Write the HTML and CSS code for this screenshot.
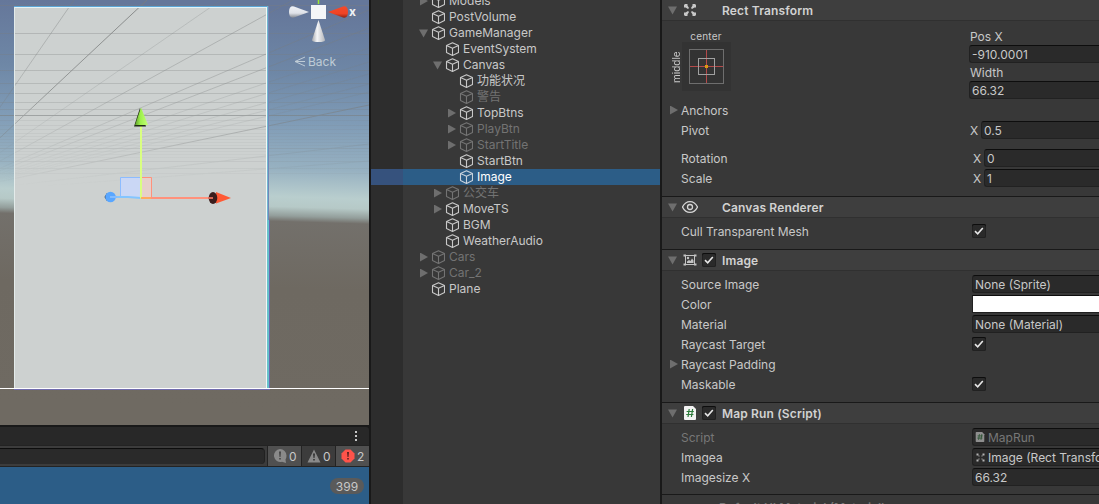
FILE: index.html
```html
<!DOCTYPE html>
<html lang="zh-CN">
<head>
    <meta charset="UTF-8">
    <meta name="viewport" content="width=device-width, initial-scale=1.0">
    <title>Editor</title>
    <link rel="stylesheet" href="styles.css">
</head>
<body>
    <svg class="defs" aria-hidden="true">
        <symbol id="cube" viewBox="0 0 14 14">
            <path d="M7.500.8 13.500 3.600v7L7.500 13.400 1.500 10.600v-7zM1.500 3.600l6 2.700 6-2.700M7.500 6.300v7" fill="none" stroke="currentColor" stroke-width="1.100" stroke-linejoin="round"/>
        </symbol>
        <symbol id="check" viewBox="0 0 14 14">
            <path d="M3 7.200 5.700 9.800 10.800 4" fill="none" stroke="#e6e6e6" stroke-width="1.600"/>
        </symbol>
        <symbol id="rect" viewBox="0 0 14 14">
            <path d="M2 1h2.500v1.500L6 5 5 6 2.500 4.500H1V2zM12 1H9.500v1.500L8 5l1 1 2.500-1.500H13V2zM2 13h2.500v-1.500L6 9 5 8 2.500 9.500H1V12zM12 13H9.500v-1.500L8 9l1-1 2.500 1.500H13V12z" fill="currentColor"/>
        </symbol>
        <symbol id="script" viewBox="0 0 12 14">
            <path d="M1 0h8l3 3v10a1 1 0 0 1-1 1H1a1 1 0 0 1-1-1V1a1 1 0 0 1 1-1z" fill="#f2f2f2"/>
            <path d="M5.200 3 4 11M8.600 3 7.400 11M2.600 5.500h7.200M2.200 8.500h7.200" fill="none" stroke="#2c7a3a" stroke-width="1.200"/>
        </symbol>
    </svg>

    <div class="editor">
        <div class="left">
            <svg class="scene" width="369" height="425" viewBox="0 0 369 425">
                <defs>
                    <linearGradient id="sky" gradientUnits="userSpaceOnUse" x1="0" y1="0" x2="-12" y2="400">
                        <stop offset="0" stop-color="#65779a"/>
                        <stop offset=".16" stop-color="#6e87a6"/>
                        <stop offset=".28" stop-color="#7f9bb6"/>
                        <stop offset=".4" stop-color="#97b1c1"/>
                        <stop offset=".47" stop-color="#b9cece"/>
                        <stop offset=".495" stop-color="#b6c9c7"/>
                        <stop offset=".518" stop-color="#939e9b"/>
                        <stop offset=".532" stop-color="#73706b"/>
                        <stop offset=".7" stop-color="#6e6961"/>
                        <stop offset="1" stop-color="#6f6a62"/>
                    </linearGradient>
                    <linearGradient id="fade" x1="0" y1="0" x2="0" y2="1">
                        <stop offset="0" stop-color="#fff"/>
                        <stop offset=".5" stop-color="#ccc"/>
                        <stop offset="1" stop-color="#000"/>
                    </linearGradient>
                    <mask id="haze"><rect width="369" height="186" fill="url(#fade)"/></mask>
                    <linearGradient id="green" x1="0" x2="1">
                        <stop offset="0" stop-color="#5c9a2b"/>
                        <stop offset=".4" stop-color="#9cf04a"/>
                        <stop offset="1" stop-color="#c5ff78"/>
                    </linearGradient>
                    <linearGradient id="cone" x1="0" x2="1">
                        <stop offset="0" stop-color="#a5a7ab"/>
                        <stop offset=".4" stop-color="#f4f5f7"/>
                        <stop offset="1" stop-color="#b4b6ba"/>
                    </linearGradient>
                    <linearGradient id="coneSide" x1="0" y1="0" x2="0" y2="1">
                        <stop offset="0" stop-color="#eff2f6"/>
                        <stop offset=".6" stop-color="#dfe2e8"/>
                        <stop offset="1" stop-color="#858a92"/>
                    </linearGradient>
                    <linearGradient id="redSide" x1="0" y1="0" x2="0" y2="1">
                        <stop offset="0" stop-color="#f44a2b"/>
                        <stop offset=".65" stop-color="#ee4325"/>
                        <stop offset="1" stop-color="#8c2414"/>
                    </linearGradient>
                </defs>

                <rect width="369" height="425" fill="url(#sky)"/>
                <path d="M14 7H268V388H14z" fill="#cdd1d0"/>

                <!-- ground grid, vanishing to the left of the view -->
                <g fill="none" stroke="#7b7e7e" mask="url(#haze)">
                    <path stroke-opacity=".34" d="M0 5.500H369M0 33.500H369M0 54.500H369M0 70.500H369M0 83.500H369M0 93.500H369M0 102.500H369M0 109.500H369"/>
                    <path stroke-opacity=".9" d="M0 115.500H369"/>
                    <path stroke-opacity=".2" d="M0 120.500H369M0 125.500H369M0 129.500H369M0 133.500H369M0 136.500H369M0 139.500H369M0 142.500H369M0 145.500H369M0 151.500H369M0 154.500H369M0 157.500H369"/>
                    <path stroke-opacity=".6" d="M0 148.500H369M0 161.500H369M0 168.500H369M0 173.500H369"/>
                    <path stroke-opacity=".4" d="M-60 194 74 0M-60 194 293 0M-60 194 392 0M-60 194 369 28"/>
                    <path stroke-opacity=".26" d="M-60 194 221 0M-60 194 369 48M-60 194 369 62M-60 194 369 74M-60 194 369 84M-60 194 369 92"/>
                    <path stroke-opacity=".85" d="M-60 194 147 0M-60 194 369 105"/>
                    <path stroke-opacity=".6" d="M-60 194 369 144M-60 194 369 161"/>
                </g>

                <path d="M14.500 7V388" stroke="#e3ebea"/>
                <path d="M14 6.500H268" stroke="#5ba6d8"/>
                <path d="M15 7.500H267" stroke="#e4f3f6"/>
                <path d="M266.500 7V388" stroke="#f2f7f6"/>
                <path d="M267.500 6V388" stroke="#70b9d0"/>
                <path d="M268.500 6V220" stroke="#7384b8"/>
                <path d="M268 220V388" stroke="#66c2cb" stroke-width="2"/>
                <path d="M269.500 220V388" stroke="#6c66ab"/>
                <path d="M14 389.500H270" stroke="#716cae"/>
                <path d="M0 388.500H369" stroke="#fff"/>

                <!-- move gizmo -->
                <path d="M120.500 197V177.500H141V197z" fill="#cad7f5"/>
                <path d="M120.500 197V177.500H141" fill="none" stroke="#8dbcff"/>
                <path d="M141 177.500H151.500V197H141z" fill="#e6cfcb"/>
                <path d="M141 177.500H151.500V197" fill="none" stroke="#ff927c"/>
                <path d="M141 198H212" stroke="#ff927c" stroke-width="2"/>
                <path d="M115 197H128L141 198" fill="none" stroke="#83c5ff" stroke-width="2"/>
                <path d="M141 126V198.500" stroke="#d9ff80" stroke-width="2"/>
                <path d="M141 198H151" stroke="#ffa960" stroke-width="2"/>
                <path d="M104.500 197 107 193V201z" fill="#1c2a38"/>
                <circle cx="110.500" cy="197" r="5.300" fill="#5aa7ff"/>
                <path d="M110 197H117" stroke="#83bcff" stroke-width="2"/>
                <path d="M140 108 134 126.500H146z" fill="#1e2a12"/>
                <path d="M141 107.500 135 125H148z" fill="url(#green)"/>
                <path d="M216 192 231 198 216 203.500z" fill="#ff5a35"/>
                <ellipse cx="213" cy="198" rx="4.300" ry="6" fill="#3c1d1c"/>
                <path d="M209 198H213" stroke="#d46555" stroke-width="2"/>

                <!-- orientation gizmo -->
                <path d="M318.500 0V4" stroke="#9be832" stroke-width="1.500"/>
                <path d="M309 12 294 6.500Q289 5.500 289 12T294 17.500z" fill="url(#coneSide)"/>
                <path d="M328 12 343 6.500Q348 5.500 348 12T343 17.500z" fill="url(#redSide)"/>
                <path d="M318.500 20 325 40Q325 42 318.500 42T312 40z" fill="url(#cone)"/>
                <path d="M311 5H326V19H311z" fill="#f5f6f8"/>
                <text class="axis" x="349" y="15.500">x</text>
                <path d="M305 57 295 61.500 305 66M295 61.500H305" fill="none" stroke="#bfccd6"/>
                <text class="view" x="308" y="66">Back</text>
            </svg>

            <div class="console">
                <div class="tabs"><i></i><i></i><i></i></div>
                <div class="toolbar">
                    <div class="search"></div>
                    <div class="count on">
                        <svg width="14" height="14" viewBox="0 0 14 14"><path d="M7 0a6.500 6.500 0 0 1 6.500 6.500c0 2-.5 3-1 4l.5 3.500-4-1.200A6.500 6.500 0 1 1 7 0z" fill="#8a8a8a"/><path d="M6 2.500h2L7.500 8h-1zM6.200 9h1.600v1.600H6.200z" fill="#444"/></svg>
                        <span>0</span>
                    </div>
                    <div class="count">
                        <svg width="14" height="14" viewBox="0 0 14 14"><path d="M7 .5 13.500 13.500H.5z" fill="#8a8a8a"/><path d="M6 4.500h2l-.5 4.500h-1zM6.200 10h1.600v1.600H6.200z" fill="#333"/></svg>
                        <span>0</span>
                    </div>
                    <div class="count on">
                        <svg width="14" height="14" viewBox="0 0 14 14"><path d="M4.500.5h5l4 4v5l-4 4h-5l-4-4v-5z" fill="#ff534a"/><path d="M6 3h2l-.5 5h-1zM6.200 9h1.600v1.600H6.200z" fill="#5a2020"/></svg>
                        <span>2</span>
                    </div>
                </div>
                <div class="log"><span class="badge">399</span></div>
            </div>
        </div>

        <div class="hierarchy">
            <div class="row"><b class="fold"></b><svg><use href="#cube"/></svg><span>Models</span></div>
            <div class="row"><b></b><svg><use href="#cube"/></svg><span>PostVolume</span></div>
            <div class="row"><b class="fold open"></b><svg><use href="#cube"/></svg><span>GameManager</span></div>
            <div class="row l1"><b></b><svg><use href="#cube"/></svg><span>EventSystem</span></div>
            <div class="row l1"><b class="fold open"></b><svg><use href="#cube"/></svg><span>Canvas</span></div>
            <div class="row l2"><b></b><svg><use href="#cube"/></svg><span>功能状况</span></div>
            <div class="row l2 off"><b></b><svg><use href="#cube"/></svg><span>警告</span></div>
            <div class="row l2"><b class="fold"></b><svg><use href="#cube"/></svg><span>TopBtns</span></div>
            <div class="row l2 off"><b class="fold"></b><svg><use href="#cube"/></svg><span>PlayBtn</span></div>
            <div class="row l2 off"><b class="fold"></b><svg><use href="#cube"/></svg><span>StartTitle</span></div>
            <div class="row l2"><b></b><svg><use href="#cube"/></svg><span>StartBtn</span></div>
            <div class="row l2 selected"><b></b><svg><use href="#cube"/></svg><span>Image</span></div>
            <div class="row l1 off"><b class="fold"></b><svg><use href="#cube"/></svg><span>公交车</span></div>
            <div class="row l1"><b class="fold"></b><svg><use href="#cube"/></svg><span>MoveTS</span></div>
            <div class="row l1"><b></b><svg><use href="#cube"/></svg><span>BGM</span></div>
            <div class="row l1"><b></b><svg><use href="#cube"/></svg><span>WeatherAudio</span></div>
            <div class="row off"><b class="fold"></b><svg><use href="#cube"/></svg><span>Cars</span></div>
            <div class="row off"><b class="fold"></b><svg><use href="#cube"/></svg><span>Car_2</span></div>
            <div class="row"><b></b><svg><use href="#cube"/></svg><span>Plane</span></div>
        </div>

        <div class="inspector">
            <section class="transform">
                <header>
                    <b class="fold open"></b>
                    <svg class="icon" width="16" height="14"><use href="#rect"/></svg>
                    <h2>Rect Transform</h2>
                </header>
                <div class="anchor-row">
                    <span class="middle">middle</span>
                    <div class="anchor">
                        <span>center</span>
                        <svg width="49" height="49" viewBox="0 0 49 49">
                            <rect width="49" height="49" fill="#333"/>
                            <path d="M24.500 8V41M8 24.500H41" stroke="#b34a4a"/>
                            <rect x="7.500" y="7.500" width="34" height="34" fill="none" stroke="#6e6e6e"/>
                            <rect x="16.500" y="16.500" width="16" height="16" fill="none" stroke="#a0a0a0"/>
                            <rect x="23" y="23" width="3" height="3" fill="#d99a10"/>
                        </svg>
                    </div>
                    <div class="size">
                        <label>Pos X</label>
                        <div class="field">-910.0001</div>
                        <label>Width</label>
                        <div class="field">66.32</div>
                    </div>
                </div>
                <div class="prop"><b class="fold"></b><label>Anchors</label></div>
                <div class="prop pivot"><b></b><label>Pivot</label><span class="axis-x">X</span><div class="field">0.5</div></div>
                <div class="prop gap"><b></b><label>Rotation</label><span class="axis-x">X</span><div class="field">0</div></div>
                <div class="prop"><b></b><label>Scale</label><span class="axis-x">X</span><div class="field">1</div></div>
            </section>

            <section class="renderer">
                <header>
                    <b class="fold open"></b>
                    <svg class="icon" width="16" height="16" viewBox="0 0 16 16"><path d="M.5 8C4 .8 12 .8 15.500 8 12 15.200 4 15.200.5 8z" fill="none" stroke="#d6d6d6" stroke-width="1.300"/><circle cx="8" cy="8" r="2.500" fill="none" stroke="#d6d6d6" stroke-width="1.300"/></svg>
                    <h2>Canvas Renderer</h2>
                </header>
                <div class="prop"><b></b><label>Cull Transparent Mesh</label><svg class="check"><use href="#check"/></svg></div>
            </section>

            <section class="image">
                <header>
                    <b class="fold open"></b>
                    <svg class="icon" width="16" height="16" viewBox="0 0 16 16"><path d="M3 3.500H13M3 12.500H13M3.500 3V13M12.500 3V13" stroke="#c4c4c4"/><path d="M1.500 2.500h2.500v2H1.500zM12 2.500h2.500v2H12zM1.500 11.500h2.500v2H1.500zM12 11.500h2.500v2H12zM5 11V9.500L7 8l1.500 1L10 6.500l1.500 2V11z" fill="#c4c4c4"/><circle cx="6" cy="6" r="1.200" fill="#c4c4c4"/></svg>
                    <svg class="check"><use href="#check"/></svg>
                    <h2>Image</h2>
                </header>
                <div class="prop"><b></b><label>Source Image</label><div class="field">None (Sprite)</div></div>
                <div class="prop"><b></b><label>Color</label><div class="field white"></div></div>
                <div class="prop"><b></b><label>Material</label><div class="field">None (Material)</div></div>
                <div class="prop"><b></b><label>Raycast Target</label><svg class="check"><use href="#check"/></svg></div>
                <div class="prop"><b class="fold"></b><label>Raycast Padding</label></div>
                <div class="prop"><b></b><label>Maskable</label><svg class="check"><use href="#check"/></svg></div>
            </section>

            <section class="script">
                <header>
                    <b class="fold open"></b>
                    <svg class="icon" width="16" height="14"><use href="#script"/></svg>
                    <svg class="check"><use href="#check"/></svg>
                    <h2>Map Run (Script)</h2>
                </header>
                <div class="prop disabled"><b></b><label>Script</label><div class="field"><svg width="10" height="10"><use href="#script"/></svg>MapRun</div></div>
                <div class="prop"><b></b><label>Imagea</label><div class="field object"><svg width="11" height="11" viewBox="0 0 11 11"><path d="M1.500 1.500h2v2h-2zM7.500 1.500h2v2h-2zM1.500 7.500h2v2h-2zM7.500 7.500h2v2h-2zM3.500 3.500h1v1h-1zM6.500 3.500h1v1h-1zM3.500 6.500h1v1h-1zM6.500 6.500h1v1h-1z" fill="#b4b4b4"/></svg>Image (Rect Transform)</div></div>
                <div class="prop"><b></b><label>Imagesize X</label><div class="field">66.32</div></div>
            </section>

            <section class="material">Default UI Material (Material)</section>
        </div>
    </div>
</body>
</html>
```

FILE: styles.css
```css
body {
    margin: 0;
    background: #191919;
    color: #c8c8c8;
    font-family: Inter, 'Noto Sans CJK SC', sans-serif;
    font-size: 12px;
    overflow: hidden;
}
.defs {
    display: none;
}
.editor {
    display: flex;
    gap: 2px;
    width: 1099px;
    height: 504px;
    overflow: hidden;
}

/* scene + console */
.left {
    width: 369px;
    flex: none;
}
.scene {
    display: block;
}
.axis {
    font-size: 12px;
    font-weight: 700;
    fill: #f0f2f4;
}
.view {
    font-size: 12px;
    fill: #bfccd6;
}
.console {
    margin-top: 2px;
    height: 77px;
    background: #282828;
    border-radius: 0 3px 0 0;
}
.tabs {
    height: 18px;
    box-sizing: border-box;
    padding: 4px 12px 0 0;
    display: flex;
    flex-direction: column;
    align-items: flex-end;
    gap: 2px;
}
.tabs i {
    width: 2px;
    height: 2px;
    background: #c8c8c8;
}
.toolbar {
    display: flex;
    height: 20px;
    background: #3c3c3c;
    border-top: 1px solid #232323;
    border-bottom: 1px solid #232323;
}
.search {
    width: 264px;
    height: 15px;
    margin: 2px 2px 0 0;
    background: #2a2a2a;
    border-top: 1px solid #0d0d0d;
    border-right: 1px solid #212121;
    border-radius: 0 4px 4px 0;
    flex: none;
}
.count {
    display: flex;
    align-items: center;
    width: 28px;
    padding-left: 5px;
    gap: 2px;
    border-left: 1px solid #232323;
}
.count svg {
    flex: none;
    margin-bottom: 1px;
}
.count.on {
    background: #505050;
}
.log {
    height: 37px;
    background: #2c5d87;
    display: flex;
    justify-content: flex-end;
}
.badge {
    width: 34px;
    height: 16px;
    margin: 11px 5px 0 0;
    border-radius: 8px;
    background: #5a5a5a;
    line-height: 17px;
    text-align: center;
}

/* hierarchy */
.hierarchy {
    width: 289px;
    flex: none;
    background: linear-gradient(90deg, #2d2d2d 32px, #383838 32px);
}
.row {
    display: flex;
    align-items: center;
    height: 16px;
    padding-left: 48px;
    white-space: nowrap;
}
.row:first-child {
    margin-top: -7px;
}
.row svg {
    width: 14px;
    height: 14px;
    margin: 0 4px 0 3px;
}
.row span {
    line-height: 16px;
}
.l1 {
    padding-left: 62px;
}
.l2 {
    padding-left: 76px;
}
.off {
    color: #737373;
}
.selected {
    color: #fff;
    background: linear-gradient(90deg, #36527d 32px, #2c5d87 32px);
}
.selected svg {
    color: #c8d2dc;
}
b {
    width: 9px;
    height: 9px;
    flex: none;
}
.fold {
    background: #6e6e6e;
    clip-path: polygon(1px 0, 9px 4.5px, 1px 9px);
}
.fold.open {
    clip-path: polygon(0 1px, 9px 1px, 4.5px 9px);
}

/* inspector */
.inspector {
    width: 437px;
    flex: none;
}
section {
    box-sizing: border-box;
    margin-bottom: 1px;
    background: #383838;
    overflow: hidden;
}
.transform {
    height: 196px;
}
.renderer {
    height: 52px;
}
.image {
    height: 152px;
}
.script {
    height: 91px;
}
header {
    display: flex;
    align-items: center;
    height: 20px;
    padding-left: 6px;
    background: #3e3e3e;
    border-bottom: 1px solid #303030;
    margin-bottom: 3px;
}
.icon {
    margin-left: 5px;
}
header .check {
    margin-left: 4px;
}
h2 {
    margin: 0 0 0 6px;
    font-size: 12px;
    font-weight: 600;
    letter-spacing: 0.15px;
    color: #d2d2d2;
}
.transform h2,
.renderer h2 {
    margin-left: 24px;
}
.check {
    width: 14px;
    height: 14px;
    background: #2a2a2a;
    box-shadow: inset 0 1px #0d0d0d, inset 0 0 0 1px #212121;
    border-radius: 2px;
}
.prop {
    display: flex;
    align-items: center;
    height: 20px;
    padding-left: 8px;
}
.prop b {
    margin-left: -1px;
    margin-right: 1px;
}
.prop label {
    width: 291px;
    margin-left: 2px;
    flex: none;
}
.prop .axis-x {
    width: 11px;
    padding-left: 1px;
}
.pivot label {
    width: 288px;
}
.gap {
    margin-top: 8px;
}
.field {
    display: flex;
    align-items: center;
    flex: 1;
    box-sizing: border-box;
    height: 18px;
    padding-left: 2px;
    background: #2a2a2a;
    border: 1px solid #212121;
    border-top-color: #0d0d0d;
    border-right: 0;
    border-radius: 3px 0 0 3px;
    white-space: nowrap;
    overflow: hidden;
}
.field svg {
    flex: none;
    margin-right: 3px;
}
.field.white {
    background: #fff;
    border-radius: 0;
}
.field.object svg {
    margin-right: 2px;
}
.disabled,
.disabled .field {
    color: #777;
}
.disabled svg {
    opacity: 0.5;
}
.anchor-row {
    display: flex;
    height: 76px;
}
.middle {
    writing-mode: vertical-rl;
    transform: rotate(180deg);
    width: 14px;
    height: 49px;
    margin: 19px 0 0 7px;
    font-size: 10px;
    line-height: 14px;
    text-align: center;
}
.anchor {
    width: 49px;
    margin-left: -1px;
    font-size: 10px;
    text-align: center;
}
.anchor span {
    display: block;
    height: 18px;
    line-height: 25px;
    margin-left: -1px;
    letter-spacing: 0.2px;
}
.anchor svg {
    display: block;
}
.size {
    flex: 1;
    margin-left: 238px;
}
.size label {
    display: block;
    height: 18px;
    line-height: 20px;
    margin-left: 1px;
}
.size label:first-child {
    height: 21px;
    line-height: 26px;
}
.material {
    height: 20px;
    padding: 5px 0 0 57px;
    font-weight: 600;
    color: #777;
}
```
